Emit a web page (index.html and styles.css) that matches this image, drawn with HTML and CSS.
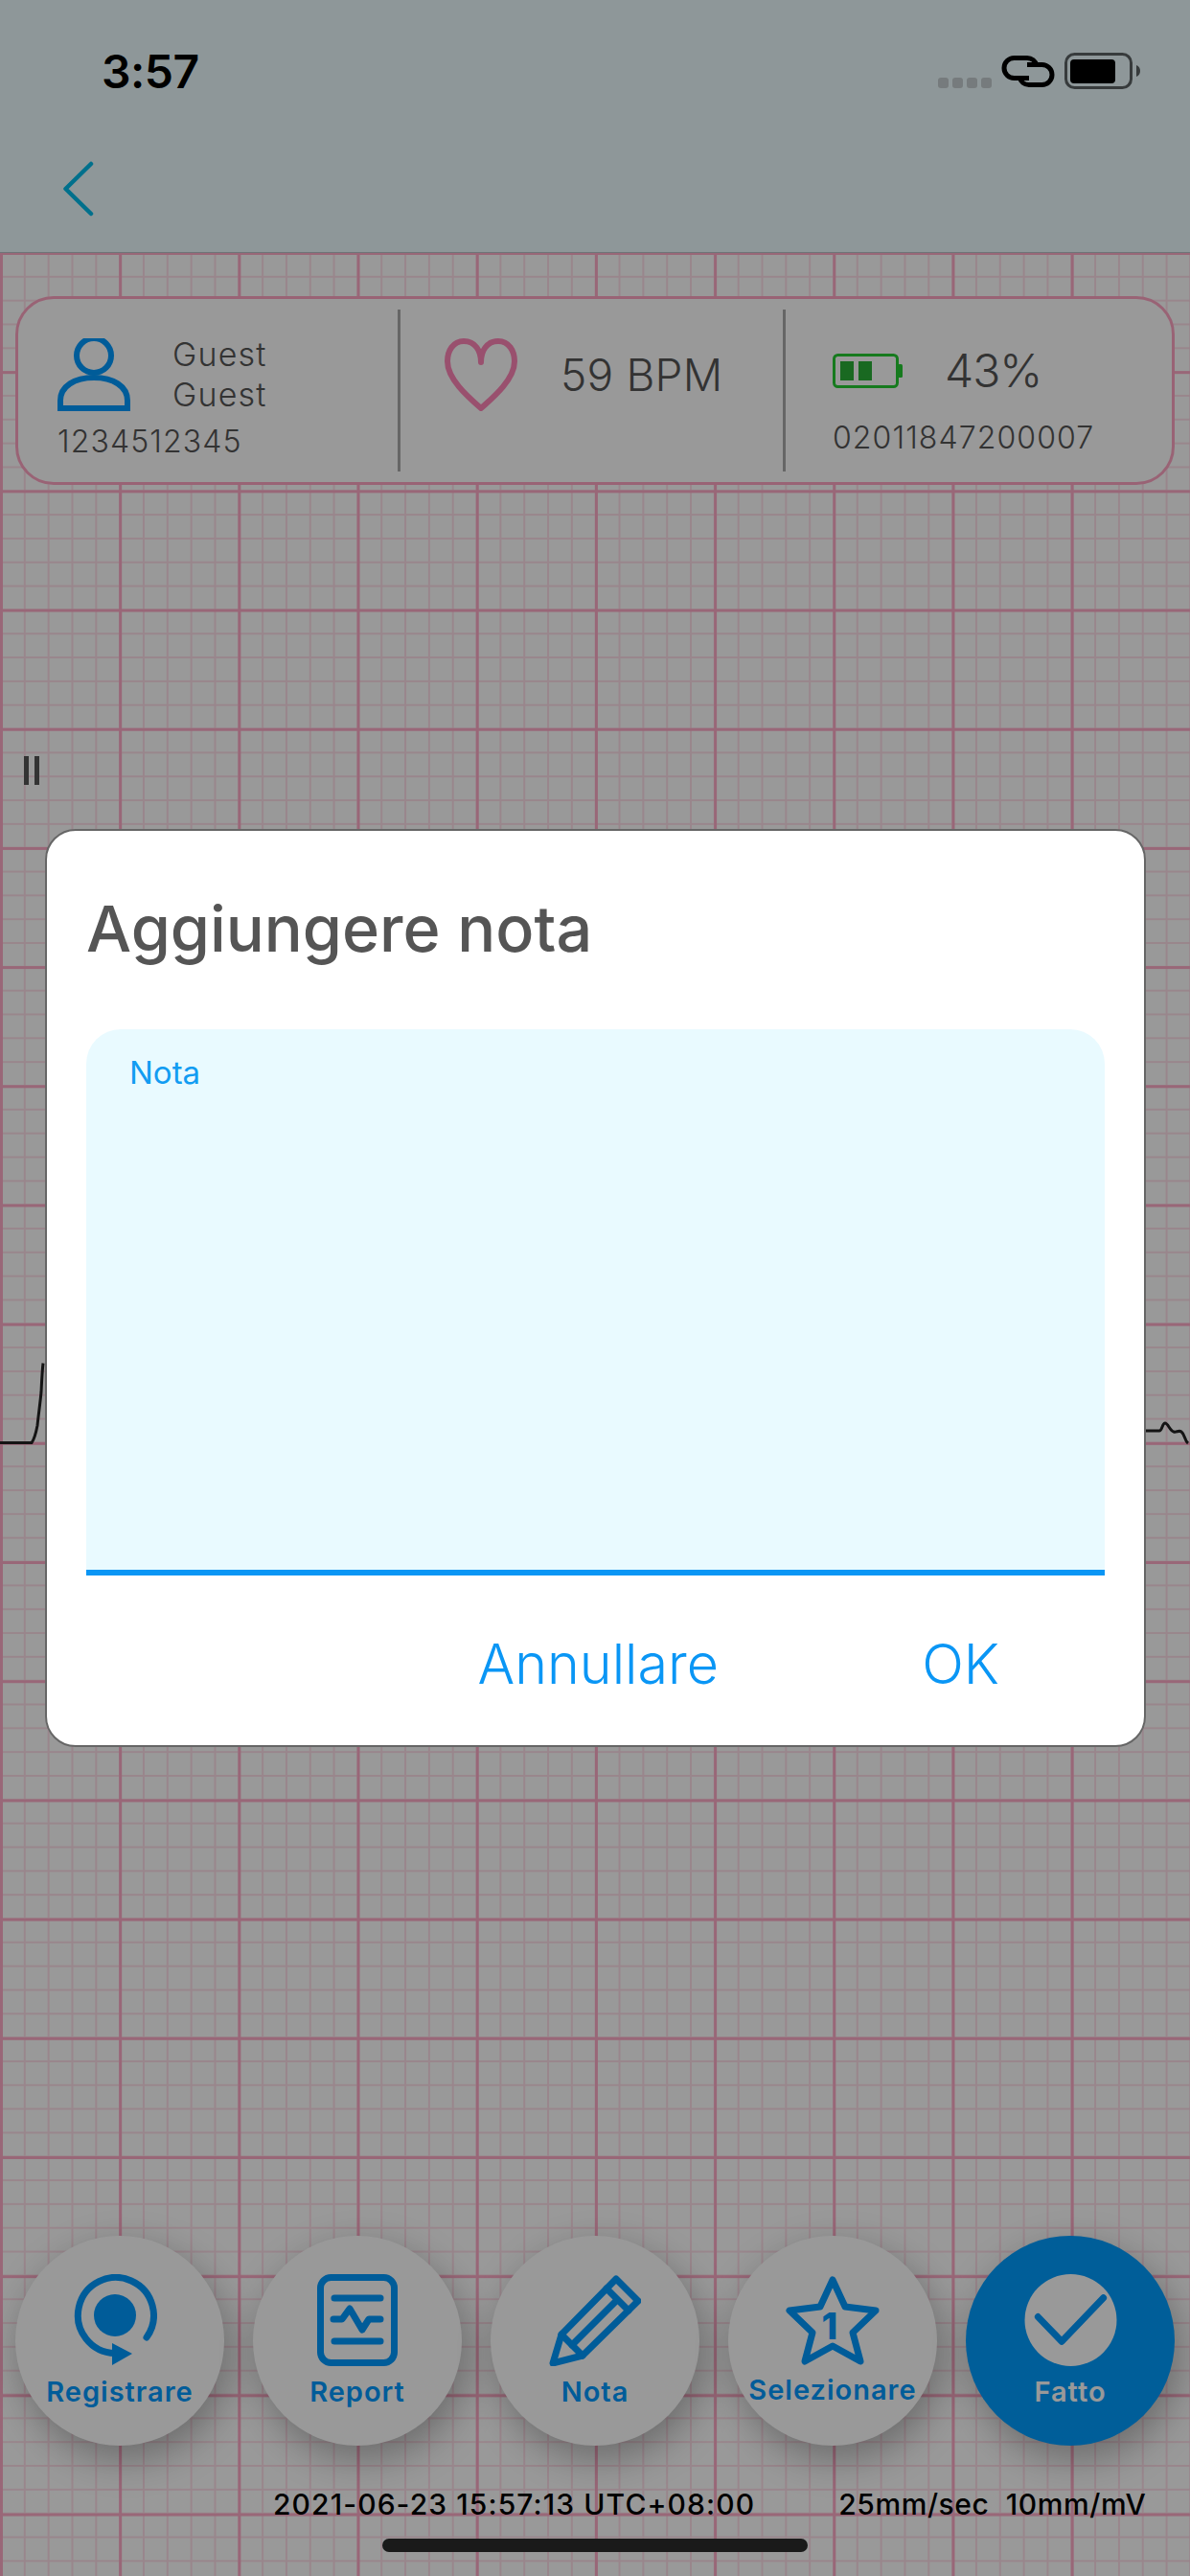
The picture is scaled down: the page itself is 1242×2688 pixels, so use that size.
FILE: index.html
```html
<!DOCTYPE html>
<html lang="it">
<head>
<meta charset="utf-8">
<title>Aggiungere nota</title>
<link rel="stylesheet" href="styles.css">
</head>
<body>
<div class="screen">
  <header class="appbar">
    <div class="status">
      <span class="clock">3:57</span>
      <div class="status-icons">
        <div class="signal"><i></i><i></i><i></i><i></i></div>
        <svg class="link-icon" width="56" height="33" viewBox="0 0 56 33"><g fill="none" stroke="#000" stroke-width="5"><path d="M29 23.500H13.500a10.500 10.500 0 0 1 0-21H27a10.500 10.500 0 0 1 10 8"/><path d="M27 9.500h15.500a10.500 10.500 0 0 1 0 21H29a10.500 10.500 0 0 1-10-8"/></g></svg>
        <svg class="phone-battery" width="80" height="38" viewBox="0 0 80 38"><rect x="1.500" y="1.500" width="68" height="35" rx="9" fill="none" stroke="#5c6365" stroke-width="3"/><rect x="6" y="7" width="47" height="25" rx="4" fill="#000"/><path d="M75 13c3 1 4 3.500 4 6s-1 5-4 6z" fill="#5c6365"/></svg>
      </div>
    </div>
    <nav class="nav">
      <svg width="34" height="58" viewBox="0 0 34 58"><path d="M30 3L3.500 29 30 55" fill="none" stroke="#00bbea" stroke-width="4.500" stroke-linecap="round" stroke-linejoin="round"/></svg>
    </nav>
  </header>

  <main class="paper">
    <svg class="trace trace-left" width="50" height="100" viewBox="0 0 50 100"><path d="M0 89.500h33c3-4 4.500-10 6-18 1-10 3-24 4-35 .5-10 1-22 2-30" fill="none" stroke="#222" stroke-width="3"/></svg>
    <svg class="trace trace-right" width="50" height="40" viewBox="0 0 50 40"><path d="M0 19h14c3 0 3-8 6-8 3 0 5 8 9 9 3 1 5-2 8 0 4 3 3 9 7 12" fill="none" stroke="#222" stroke-width="3"/></svg>

    <section class="card">
      <div class="cell cell-user">
        <div class="user-top">
          <svg width="76" height="76" viewBox="0 0 76 76"><circle cx="38" cy="18" r="18" fill="none" stroke="#0099ff" stroke-width="6"/><path d="M3 73v-8c0-15 15-24 35-24s35 9 35 24v8z" fill="none" stroke="#0099ff" stroke-width="6"/></svg>
          <div class="user-names"><span>Guest</span><span>Guest</span></div>
        </div>
        <div class="small-num">1234512345</div>
      </div>
      <div class="cell cell-heart">
        <svg width="76" height="76" viewBox="0 0 76 76"><path d="M38 25c0-12-6-22-18-22C9 3 3 13 3 24c0 18 20 36 35 49 15-13 35-31 35-49C73 13 67 3 56 3 44 3 38 13 38 25z" fill="none" stroke="#ff85b8" stroke-width="6" stroke-linejoin="round"/></svg>
        <span class="bpm">59 BPM</span>
      </div>
      <div class="cell cell-device">
        <div class="device-top">
          <svg width="73" height="36" viewBox="0 0 73 36"><rect x="1.500" y="1.500" width="66" height="33" rx="4" fill="none" stroke="#26cc33" stroke-width="3"/><rect x="8" y="8" width="14" height="20" fill="#2bb038"/><rect x="27" y="8" width="14" height="20" fill="#2bb038"/><rect x="68" y="11" width="5" height="14" rx="1.500" fill="#26cc33"/></svg>
          <span class="percent">43%</span>
        </div>
        <div class="small-num">02011847200007</div>
      </div>
    </section>

    <div class="pause"><i></i><i></i></div>

    <section class="actions">
      <button class="action action-record">
        <svg width="88" height="96" viewBox="0 0 88 96"><circle cx="44" cy="43" r="22" fill="#0099ff"/><path d="M77 66A39.500 39.500 0 1 0 44 82.500" fill="none" stroke="#0099ff" stroke-width="7" stroke-linecap="round"/><path d="M41 72l21 11-21 12z" fill="#0099ff"/></svg>
        <span>Registrare</span>
      </button>
      <button class="action">
        <svg width="84" height="96" viewBox="0 0 84 96"><rect x="3.500" y="3.500" width="77" height="89" rx="11" fill="none" stroke="#0099ff" stroke-width="7"/><g fill="none" stroke="#0099ff" stroke-width="7" stroke-linecap="round" stroke-linejoin="round"><path d="M18 25h48"/><path d="M18 70h48"/><path d="M17 47H26L34 36 47 58 54 47H66"/></g></svg>
        <span>Report</span>
      </button>
      <button class="action">
        <svg width="96" height="96" viewBox="0 0 96 96"><g fill="none" stroke="#0099ff" stroke-width="7" stroke-linejoin="round" stroke-linecap="round"><path d="M4 93L13 63 70 5 93 28 35 85z"/><path d="M13 63l22 22"/><path d="M60 15l23 23"/><path d="M24 74l47-47"/></g></svg>
        <span>Nota</span>
      </button>
      <button class="action action-select">
        <svg width="100" height="96" viewBox="0 0 100 96"><path d="M50 6L63 34 95 38 71 61 79 91 50 75 21 91 29 61 5 38 37 34z" fill="none" stroke="#0099ff" stroke-width="7" stroke-linejoin="round"/><text x="47" y="68" text-anchor="middle" class="star-num">1</text></svg>
        <span>Selezionare</span>
      </button>
      <button class="action action-done">
        <svg width="97" height="97" viewBox="0 0 97 97"><circle cx="48.500" cy="48.500" r="48.500" fill="#fff"/><path d="M14 45l25 26L83 25" fill="none" stroke="#0099ff" stroke-width="7" stroke-linecap="round" stroke-linejoin="round"/></svg>
        <span>Fatto</span>
      </button>
    </section>

    <footer class="meta">
      <span class="meta-time">2021-06-23 15:57:13 UTC+08:00</span>
      <span class="meta-scale">25mm/sec  10mm/mV</span>
    </footer>
  </main>

  <div class="scrim">
    <div class="dialog">
      <h1 class="dialog-title">Aggiungere nota</h1>
      <div class="field"><label class="field-label">Nota</label></div>
      <div class="dialog-actions">
        <span class="dialog-btn">Annullare</span>
        <span class="dialog-btn dialog-ok">OK</span>
      </div>
    </div>
  </div>

  <div class="home-bar"></div>
</div>
</body>
</html>
```

FILE: styles.css
```css
* { box-sizing: border-box; }

html, body {
  margin: 0;
  padding: 0;
}

body {
  width: 1242px;
  height: 2688px;
  overflow: hidden;
  font-family: Inter, "Noto Sans", "Liberation Sans", sans-serif;
  background: #fff;
}

.screen {
  position: relative;
  width: 1242px;
  height: 2688px;
  display: flex;
  flex-direction: column;
  overflow: hidden;
}

/* App bar */
.appbar {
  height: 264px;
  flex: none;
  background: #edfcff;
  border-bottom: 1px solid #b9c2c6;
}

.status {
  height: 150px;
  position: relative;
  display: flex;
  justify-content: space-between;
  padding: 47px 51px 0 106px;
}

.clock {
  font-size: 48px;
  font-weight: 600;
  line-height: 56px;
  color: #000;
  letter-spacing: -0.5px;
}

.status-icons {
  display: flex;
  align-items: flex-start;
  padding-top: 8px;
}

.signal {
  display: flex;
  gap: 4px;
  margin-top: 26px;
  margin-right: 10px;
}

.signal i {
  width: 11px;
  height: 11px;
  border-radius: 3px;
  background: #c5ced0;
}

.link-icon { margin-top: 3px; }
.phone-battery { margin-left: 10px; }

.nav {
  padding: 18px 0 0 65px;
}

.nav svg { display: block; }

/* ECG paper */
.paper {
  position: relative;
  flex: 1;
  padding: 45px 16px 0;
  background-color: #fff;
  background-image:
    linear-gradient(to right, #ffacc8 3px, transparent 3px),
    linear-gradient(to bottom, #ffacc8 3px, transparent 3px),
    linear-gradient(to right, #ffe0ea 2px, transparent 2px),
    linear-gradient(to bottom, #ffe0ea 2px, transparent 2px);
  background-size: 124.2px 124.2px, 124.2px 124.2px, 24.84px 24.84px, 24.84px 24.84px;
  background-position: 0 -1px;
}

.trace {
  position: absolute;
}

.trace-left {
  left: 0;
  top: 1152px;
}

.trace-right {
  left: 1196px;
  top: 1210px;
}

/* Info card */
.card {
  position: relative;
  height: 197px;
  display: flex;
  background: #fff;
  border: 3px solid #ffa6c4;
  border-radius: 40px;
}

.cell {
  color: #555;
  padding-top: 41px;
}

.cell-user {
  width: 396px;
  padding-left: 41px;
}

.user-top {
  display: flex;
  height: 83px;
  gap: 44px;
}

.user-names {
  display: flex;
  flex-direction: column;
  margin-top: -4px;
  font-size: 34px;
  font-weight: 300;
  line-height: 42px;
  letter-spacing: 1.2px;
}

.small-num {
  font-size: 32px;
  font-weight: 300;
  line-height: 40px;
  letter-spacing: 1.1px;
}

.cell-user .small-num { margin-top: 5px; }

.cell-heart {
  width: 402px;
  display: flex;
  align-items: flex-start;
  gap: 45px;
  padding-left: 46px;
  border-left: 3px solid #aaa;
  margin: 11px 0;
  padding-top: 30px;
}

.cell-device {
  flex: 1;
  border-left: 3px solid #aaa;
  margin: 11px 0;
  padding: 46px 0 0 49px;
}

.bpm {
  font-size: 46px;
  font-weight: 300;
  line-height: 56px;
  margin-top: 10px;
  letter-spacing: 0.2px;
}

.device-top {
  display: flex;
  align-items: center;
  gap: 44px;
  height: 36px;
}

.percent {
  font-size: 48px;
  font-weight: 300;
  line-height: 36px;
  letter-spacing: -1px;
}

.cell-device .small-num { margin-top: 32px; }

/* Pause */
.pause {
  position: relative;
  display: flex;
  gap: 6px;
  height: 30px;
  margin: 283px 0 0 9px;
}

.pause i {
  width: 5px;
  background: #555;
}

/* Action buttons */
.actions {
  position: relative;
  display: flex;
  gap: 30px;
  margin-top: 1514px;
}

.action {
  flex: none;
  width: 218px;
  height: 219px;
  border: 0;
  border-radius: 50%;
  padding: 40px 0 0;
  margin: 0;
  display: flex;
  flex-direction: column;
  align-items: center;
  background: #fff;
  color: #0099ff;
  font-family: inherit;
  box-shadow: 6px 14px 40px rgba(0, 0, 0, 0.3);
}

.action svg {
  display: block;
  height: 96px;
}

.action-record svg { margin-left: -10px; }

.action span {
  margin-top: 9px;
  font-size: 29px;
  font-weight: 600;
  line-height: 36px;
  letter-spacing: 1px;
}

.action-select span { margin-top: 7px; }

.action-done {
  background: #009dff;
  color: #fff;
}

.star-num {
  font-family: Inter, sans-serif;
  font-size: 38px;
  font-weight: 800;
  fill: #0099ff;
}

/* Footer meta */
.meta {
  position: relative;
  display: flex;
  margin-top: 43px;
  padding-left: 269px;
  font-size: 30px;
  font-weight: 500;
  line-height: 36px;
  color: #000;
  white-space: pre;
}

.meta-time { letter-spacing: 1.1px; }

.meta-scale {
  margin-left: 87px;
  letter-spacing: 0.6px;
}

/* Dialog */
.scrim {
  position: absolute;
  inset: 0;
  background: rgba(0, 0, 0, 0.4);
  padding: 865px 46px 0 47px;
}

.dialog {
  height: 958px;
  padding: 62px 41px 0 41px;
  background: #fff;
  border: 2px solid #666;
  border-radius: 32px;
}

.dialog-title {
  margin: 0;
  font-size: 66.500px;
  font-weight: 500;
  line-height: 80px;
  color: #555;
}

.field {
  height: 570px;
  margin-top: 65px;
  padding: 25px 45px;
  background: #e9faff;
  border-bottom: 6px solid #0a96f5;
  border-radius: 36px 36px 0 0;
}

.field-label {
  display: block;
  font-size: 33px;
  line-height: 40px;
  color: #129cf2;
}

.dialog-actions {
  display: flex;
  justify-content: flex-end;
  gap: 212px;
  margin-top: 57px;
  padding-right: 110px;
}

.dialog-btn {
  font-size: 57.500px;
  font-weight: 300;
  line-height: 70px;
  color: #0a96f5;
}

/* Home indicator */
.home-bar {
  position: absolute;
  left: 399px;
  top: 2649px;
  width: 444px;
  height: 14px;
  border-radius: 7px;
  background: #1a1a1a;
}
```
